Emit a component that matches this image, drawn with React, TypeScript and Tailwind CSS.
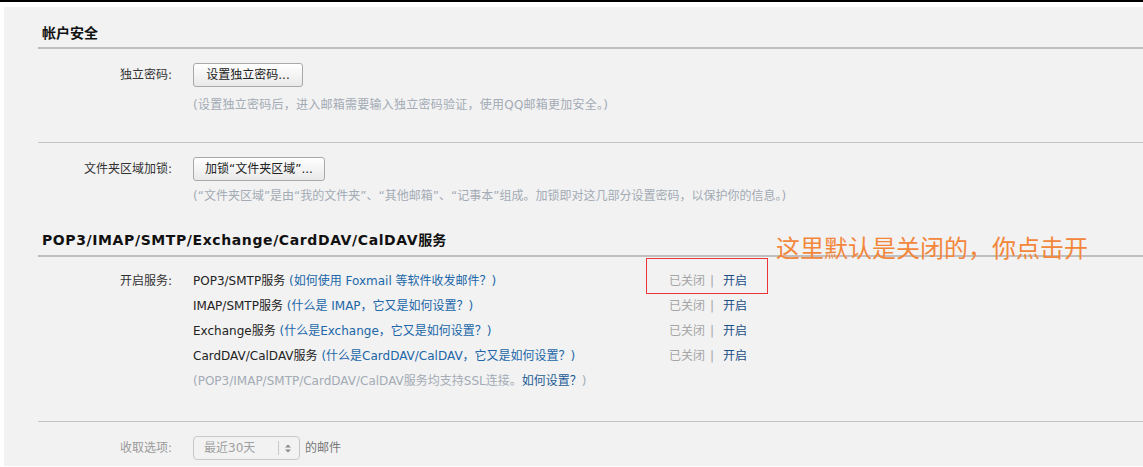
import React from 'react';

const FONT = "font-['DejaVu_Sans','Noto_Sans_CJK_SC',sans-serif]";

const SERVICES = [
  { name: 'POP3/SMTP服务', help: '(如何使用 Foxmail 等软件收发邮件？)', boxed: true },
  { name: 'IMAP/SMTP服务', help: '(什么是 IMAP，它又是如何设置？)' },
  { name: 'Exchange服务', help: '(什么是Exchange，它又是如何设置？)' },
  { name: 'CardDAV/CalDAV服务', help: '(什么是CardDAV/CalDAV，它又是如何设置？)' },
];

function Label({ children, muted }: { children: React.ReactNode; muted?: boolean }) {
  return (
    <div className={`w-[135px] shrink-0 text-right pr-[1px] ${muted ? 'text-[#9a9a9a]' : 'text-[#333]'}`}>
      {children}
    </div>
  );
}

function Btn({ children, w }: { children: React.ReactNode; w: string }) {
  return (
    <button
      className={`${w} h-[24px] ml-[20px] rounded-[3px] border border-[#a9a9a9] bg-gradient-to-b from-white to-[#e9e9e9] text-[12px] text-[#222] leading-[22px] text-center`}
    >
      {children}
    </button>
  );
}

export default function App() {
  return (
    <div className={`relative bg-white text-[12px] ${FONT}`}>
      <div className="h-[2px] bg-black" />
      <div className="pt-[5px] pl-[4px]">
        <div className="bg-[#f2f2f2] pl-[34px] pb-[6px]">
          {/* 帐户安全 */}
          <div className="pt-[16px] pb-[4px] pl-[4px] border-b-2 border-[#bfbfbf] text-[14px] leading-[20px] font-bold text-[#111]">
            帐户安全
          </div>

          <div className="border-b border-[#c4c4c4] pb-[28px]">
            <div className="mt-[14px] flex items-center">
              <Label>独立密码:</Label>
              <Btn w="w-[110px]">设置独立密码...</Btn>
            </div>
            <div className="mt-[9px] ml-[155px] leading-[18px] tracking-[0.25px] text-[#a3abb5]">
              (设置独立密码后，进入邮箱需要输入独立密码验证，使用QQ邮箱更加安全。)
            </div>
          </div>

          <div className="mt-[14px] flex items-center">
            <Label>文件夹区域加锁:</Label>
            <Btn w="w-[132px]">加锁“文件夹区域”...</Btn>
          </div>
          <div className="mt-[6px] ml-[155px] leading-[18px] text-[#a3abb5]">
            (“文件夹区域”是由“我的文件夹”、“其他邮箱”、“记事本”组成。加锁即对这几部分设置密码，以保护你的信息。)
          </div>

          {/* 服务 */}
          <div className="mt-[25px] pb-[5px] pl-[4px] border-b-2 border-[#bfbfbf] text-[14px] leading-[20px] font-bold text-[#111]">
            <span className="tracking-[0.6px]">POP3/IMAP/SMTP/Exchange/CardDAV/CalDAV</span>服务
          </div>

          <div className="border-b border-[#c4c4c4] pt-[12px] pb-[27px]">
            {SERVICES.map((s, i) => (
              <div key={s.name} className="flex h-[25px] leading-[25px]">
                <Label>{i === 0 ? '开启服务:' : ''}</Label>
                <div className="ml-[20px] w-[476px] shrink-0 text-[#222]">
                  {s.name} <span className="text-[#2066a8]">{s.help}</span>
                </div>
                <div className="relative flex">
                  {s.boxed && (
                    <div className="absolute left-[-23px] top-[-11px] w-[122px] h-[36px] border border-[#e8363b]" />
                  )}
                  <span className="text-[#a5a5a5]">已关闭</span>
                  <span className="ml-[5px] text-[#a5a5a5]">|</span>
                  <span className="ml-[9px] text-[#1b4f86]">开启</span>
                </div>
              </div>
            ))}
            <div className="flex h-[25px] leading-[25px]">
              <Label>{''}</Label>
              <div className="ml-[20px] text-[#a3abb5]">
                (POP3/IMAP/SMTP/CardDAV/CalDAV服务均支持SSL连接。<span className="text-[#1e5d96]">如何设置？</span>)
              </div>
            </div>
          </div>

          <div className="mt-[14px] flex items-center">
            <Label muted>收取选项:</Label>
            <div className="ml-[20px] w-[107px] h-[24px] flex items-center rounded-[4px] border border-[#c8c8c8] bg-[#f2f2f2] text-[#a0a0a0]">
              <span className="pl-[10px] w-[84px]">最近30天</span>
              <span className="h-[14px] border-l border-[#c8c8c8]" />
              <svg width="6" height="9" viewBox="0 0 6 9" className="ml-[6px]">
                <path d="M0 3.5 L3 0.5 L6 3.5 Z M0 5.5 L3 8.5 L6 5.5 Z" fill="#8a8a8a" />
              </svg>
            </div>
            <span className="ml-[5px] text-[#777]">的邮件</span>
          </div>
        </div>
      </div>

      {/* annotation */}
      <div className="absolute left-[776px] top-[233px] text-[24px] leading-[28px] text-[#f2873c] font-['Noto_Sans_CJK_SC',sans-serif] whitespace-nowrap">
        这里默认是关闭的，你点击开
      </div>
    </div>
  );
}
